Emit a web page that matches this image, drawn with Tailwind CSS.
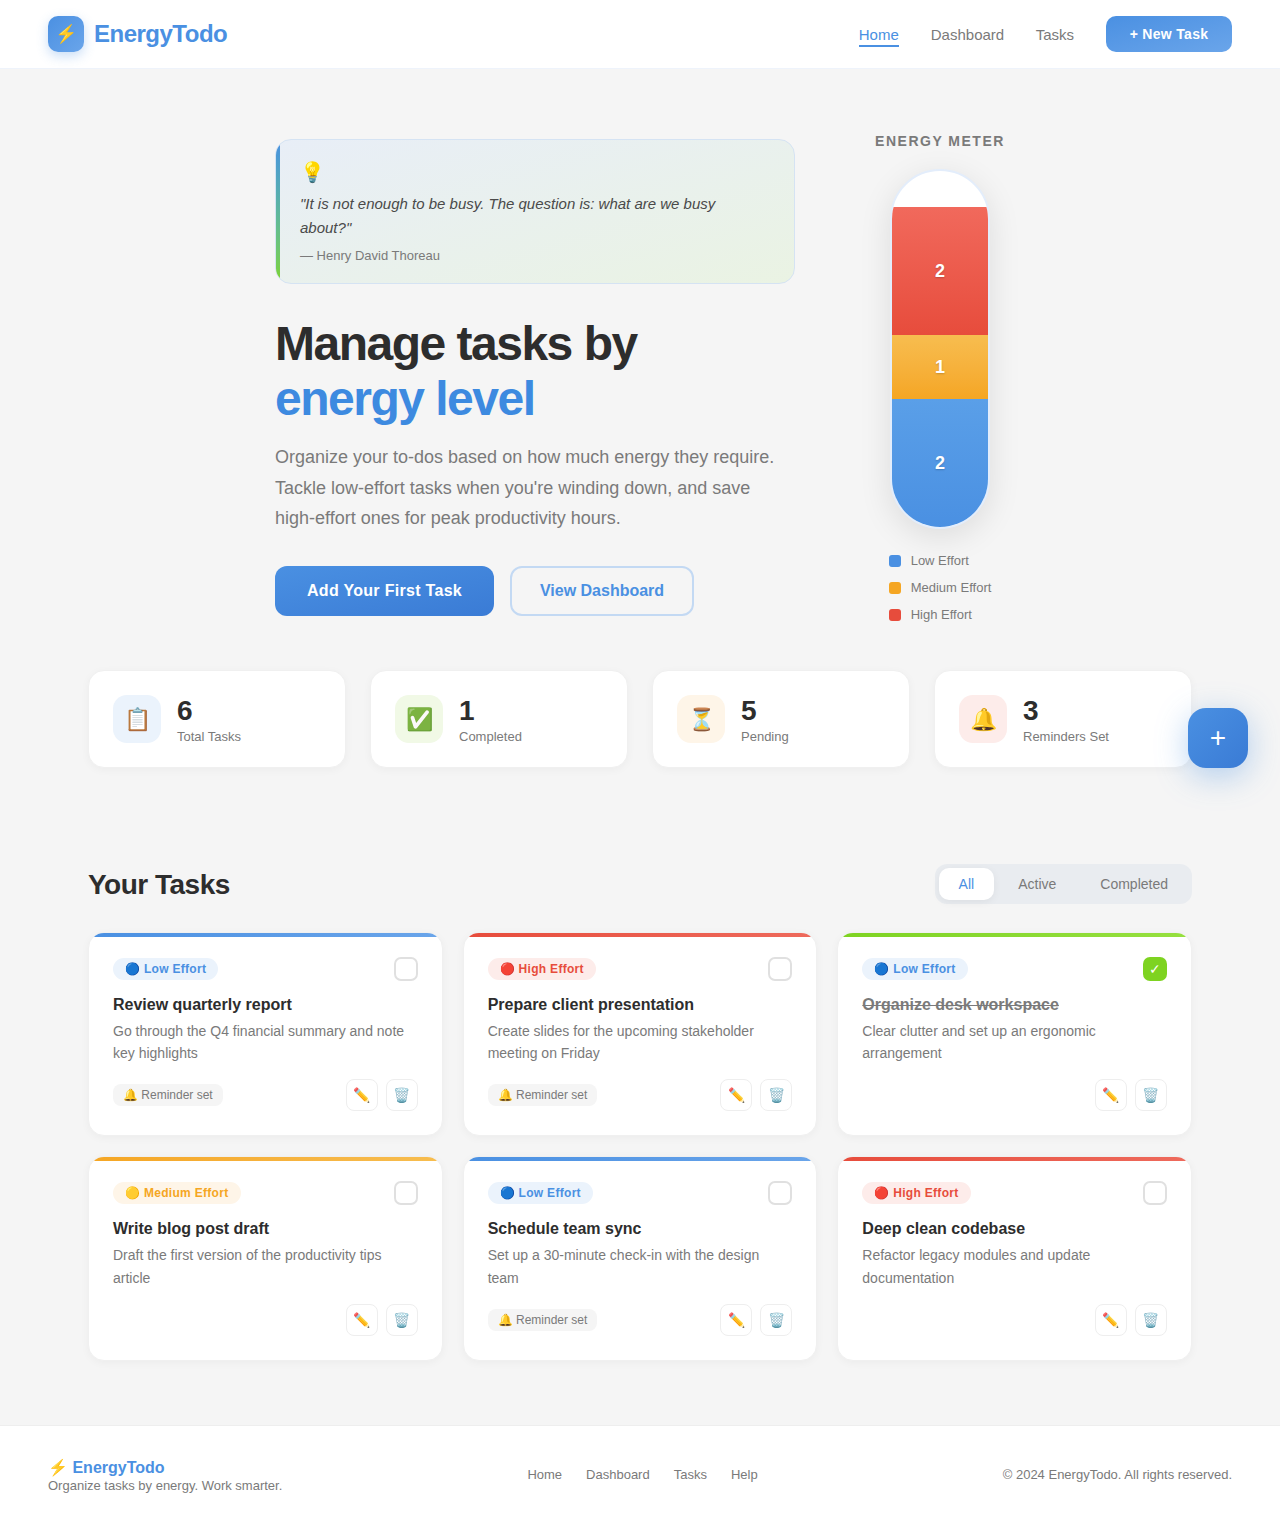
<!DOCTYPE html>
<html lang="en">
<head>
    <meta charset="UTF-8">
    <meta name="viewport" content="width=device-width, initial-scale=1.0">
    <title>EnergyTodo</title>
    <script src="https://cdn.jsdelivr.net/npm/@tailwindcss/browser@4"></script>
</head>
<body class="relative bg-[#f5f5f5] text-[#2d2d2d] font-['Liberation_Sans',sans-serif]">
    <!-- Nav -->
    <nav class="h-[69px] bg-white border-b border-[#eef3fb] px-12 flex items-center justify-between">
        <div class="flex items-center gap-2.5">
            <div class="w-9 h-9 rounded-[10px] bg-gradient-to-br from-[#4a90e2] to-[#6aa5ea] shadow-[0_4px_12px_rgba(74,144,226,0.3)] flex items-center justify-center text-lg leading-none">⚡</div>
            <span class="text-2xl font-bold tracking-[-0.5px] text-[#4a90e2]">EnergyTodo</span>
        </div>
        <div class="flex items-center gap-8">
            <a class="relative text-[15px] leading-[17px] text-[#4a90e2]" href="#">Home<span class="absolute left-0 right-0 -bottom-[4px] h-0.5 bg-[#4a90e2]"></span></a>
            <a class="-mr-[0.5px] text-[15px] leading-[17px] text-[#7a7a7a]" href="#">Dashboard</a>
            <a class="text-[15px] leading-[17px] text-[#7a7a7a]" href="#">Tasks</a>
            <button class="h-9 w-[126px] rounded-[10px] bg-gradient-to-br from-[#4a90e2] to-[#6aa5ea] text-white text-sm font-bold tracking-[0.3px]">+ New Task</button>
        </div>
    </nav>

    <!-- Hero -->
    <section class="flex justify-center items-start gap-20 pt-[63px] pb-12">
        <div class="w-[520px] mt-[7px]">
            <div class="relative overflow-hidden h-[145px] rounded-2xl border border-[#d5e3f3] bg-gradient-to-br from-[#e8eef7] to-[#eaf3e3] pl-6 pt-5">
                <div class="absolute left-0 top-0 bottom-0 w-1 bg-gradient-to-b from-[#4a90e2] to-[#7ed321]"></div>
                <div class="text-xl leading-6">💡</div>
                <p class="mt-2 text-[15px] leading-6 italic text-[#4a4a4a] w-[460px]">"It is not enough to be busy. The question is: what are we busy about?"</p>
                <p class="mt-2 text-[13px] leading-[15px] text-[#7a7a7a]">— Henry David Thoreau</p>
            </div>
            <h1 class="mt-8 text-[48px] leading-[55px] font-bold tracking-[-1.5px] text-[#2d2d2d]">Manage tasks by<br><span class="text-[#3d8ae0]">energy level</span></h1>
            <p class="mt-4 text-lg leading-[30.6px] text-[#7a7a7a]">Organize your to-dos based on how much energy they require. Tackle low-effort tasks when you're winding down, and save high-effort ones for peak productivity hours.</p>
            <div class="mt-8 flex gap-4">
                <button class="h-[50px] w-[219px] rounded-xl bg-gradient-to-br from-[#4a90e2] to-[#3a7bd5] text-white text-base font-bold tracking-[0.3px]">Add Your First Task</button>
                <button class="h-[50px] w-[184px] rounded-xl border-2 border-[#c3d9f3] text-[#4a90e2] text-base font-bold">View Dashboard</button>
            </div>
        </div>
        <div class="w-[130px] flex flex-col items-center">
            <div class="text-sm leading-[18px] font-bold tracking-[1.5px] text-[#7a7a7a] whitespace-nowrap">ENERGY METER</div>
            <div class="mt-[19px] w-[100px] h-[360px] rounded-[50px] border-2 border-[#e3edfb] bg-white overflow-hidden flex flex-col justify-end shadow-[0_8px_32px_rgba(0,0,0,0.1)]">
                <div class="h-32 bg-gradient-to-b from-[#f1695c] to-[#e74c3c] flex items-center justify-center text-white font-bold text-lg [text-shadow:0_1px_2px_rgba(0,0,0,0.2)]">2</div>
                <div class="h-16 bg-gradient-to-b from-[#f7bd4f] to-[#f5a623] flex items-center justify-center text-white font-bold text-lg [text-shadow:0_1px_2px_rgba(0,0,0,0.2)]">1</div>
                <div class="h-32 bg-gradient-to-b from-[#5a9fe8] to-[#4a90e2] flex items-center justify-center text-white font-bold text-lg [text-shadow:0_1px_2px_rgba(0,0,0,0.2)]">2</div>
            </div>
            <div class="mt-6 flex flex-col gap-3 text-[13px] leading-[15px] text-[#7a7a7a] self-center">
                <div class="flex items-center gap-2.5"><span class="w-3 h-3 rounded-[3px] bg-[#4a90e2]"></span>Low Effort</div>
                <div class="flex items-center gap-2.5"><span class="w-3 h-3 rounded-[3px] bg-[#f5a623]"></span>Medium Effort</div>
                <div class="flex items-center gap-2.5"><span class="w-3 h-3 rounded-[3px] bg-[#e74c3c]"></span>High Effort</div>
            </div>
        </div>
    </section>

    <!-- Stats -->
    <section class="mx-[88px] grid grid-cols-4 gap-6">
        <div class="h-[98px] rounded-2xl bg-white border border-[#f0f0f0] shadow-[0_2px_8px_rgba(0,0,0,0.04)] flex items-center gap-4 px-6">
            <div class="w-12 h-12 rounded-[14px] bg-[#ebf3fc] flex items-center justify-center text-[22px]">📋</div>
            <div><div class="text-[28px] leading-8 font-bold">6</div><div class="mt-[2px] text-[13px] leading-[15px] text-[#7a7a7a]">Total Tasks</div></div>
        </div>
        <div class="h-[98px] rounded-2xl bg-white border border-[#f0f0f0] shadow-[0_2px_8px_rgba(0,0,0,0.04)] flex items-center gap-4 px-6">
            <div class="w-12 h-12 rounded-[14px] bg-[#f1f9e6] flex items-center justify-center text-[22px]">✅</div>
            <div><div class="text-[28px] leading-8 font-bold">1</div><div class="mt-[2px] text-[13px] leading-[15px] text-[#7a7a7a]">Completed</div></div>
        </div>
        <div class="h-[98px] rounded-2xl bg-white border border-[#f0f0f0] shadow-[0_2px_8px_rgba(0,0,0,0.04)] flex items-center gap-4 px-6">
            <div class="w-12 h-12 rounded-[14px] bg-[#fef5e8] flex items-center justify-center text-[22px]">⏳</div>
            <div><div class="text-[28px] leading-8 font-bold">5</div><div class="mt-[2px] text-[13px] leading-[15px] text-[#7a7a7a]">Pending</div></div>
        </div>
        <div class="h-[98px] rounded-2xl bg-white border border-[#f0f0f0] shadow-[0_2px_8px_rgba(0,0,0,0.04)] flex items-center gap-4 px-6">
            <div class="w-12 h-12 rounded-[14px] bg-[#fdecea] flex items-center justify-center text-[22px]">🔔</div>
            <div><div class="text-[28px] leading-8 font-bold">3</div><div class="mt-[2px] text-[13px] leading-[15px] text-[#7a7a7a]">Reminders Set</div></div>
        </div>
    </section>

    <!-- Floating add button -->
    <button class="absolute left-[1188px] top-[708px] w-[60px] h-[60px] rounded-[18px] bg-gradient-to-br from-[#4a90e2] to-[#3a7bd5] text-white text-[28px] leading-none shadow-[0_8px_32px_rgba(74,144,226,0.4)]">+</button>

    <!-- Tasks -->
    <section class="mx-[88px] mt-[95px]">
        <div class="flex items-center justify-between">
            <h2 class="mt-[2px] text-[28px] leading-[40px] font-bold tracking-[-0.5px]">Your Tasks</h2>
            <div class="flex gap-1 p-1 rounded-xl bg-[#e9ecf0] text-sm">
                <button class="h-8 px-5 rounded-[10px] bg-white text-[#4a90e2] shadow-[0_2px_8px_rgba(0,0,0,0.06)]">All</button>
                <button class="h-8 px-5 rounded-[10px] text-[#7a7a7a]">Active</button>
                <button class="h-8 px-5 rounded-[10px] text-[#7a7a7a]">Completed</button>
            </div>
        </div>
        <div class="mt-[27px] grid grid-cols-3 gap-x-5 gap-y-5">
            <!-- Card 1 -->
            <div class="relative overflow-hidden rounded-2xl bg-white border border-[#f0f0f0] shadow-[0_2px_8px_rgba(0,0,0,0.04)] p-6 flex flex-col">
                <div class="absolute left-0 right-0 top-0 h-1 bg-gradient-to-r from-[#4a90e2] to-[#6aa5ea]"></div>
                <div class="flex items-center justify-between">
                    <span class="h-[22px] px-3 rounded-full bg-[#ebf3fc] text-[#4a90e2] text-xs font-bold tracking-[0.3px] flex items-center">🔵 Low Effort</span>
                    <span class="w-6 h-6 rounded-[7px] border-2 border-[#e0e0e0]"></span>
                </div>
                <h3 class="mt-[13px] text-base leading-[22px] font-bold">Review quarterly report</h3>
                <p class="mt-1 text-sm leading-[22.4px] text-[#7a7a7a]">Go through the Q4 financial summary and note key highlights</p>
                <div class="mt-[14.6px] flex items-center justify-between">
                    <span class="h-[22px] px-2.5 rounded-lg bg-[#f5f5f5] text-xs text-[#7a7a7a] flex items-center">🔔 Reminder set</span>
                    <div class="ml-auto flex gap-2">
                        <button class="w-8 h-8 rounded-lg border border-[#eeeeee] text-sm">✏️</button>
                        <button class="w-8 h-8 rounded-lg border border-[#eeeeee] text-sm">🗑️</button>
                    </div>
                </div>
            </div>
            <!-- Card 2 -->
            <div class="relative overflow-hidden rounded-2xl bg-white border border-[#f0f0f0] shadow-[0_2px_8px_rgba(0,0,0,0.04)] p-6 flex flex-col">
                <div class="absolute left-0 right-0 top-0 h-1 bg-gradient-to-r from-[#e74c3c] to-[#ee6a5c]"></div>
                <div class="flex items-center justify-between">
                    <span class="h-[22px] px-3 rounded-full bg-[#fdecea] text-[#e74c3c] text-xs font-bold tracking-[0.3px] flex items-center">🔴 High Effort</span>
                    <span class="w-6 h-6 rounded-[7px] border-2 border-[#e0e0e0]"></span>
                </div>
                <h3 class="mt-[13px] text-base leading-[22px] font-bold">Prepare client presentation</h3>
                <p class="mt-1 text-sm leading-[22.4px] text-[#7a7a7a]">Create slides for the upcoming stakeholder meeting on Friday</p>
                <div class="mt-[14.6px] flex items-center justify-between">
                    <span class="h-[22px] px-2.5 rounded-lg bg-[#f5f5f5] text-xs text-[#7a7a7a] flex items-center">🔔 Reminder set</span>
                    <div class="ml-auto flex gap-2">
                        <button class="w-8 h-8 rounded-lg border border-[#eeeeee] text-sm">✏️</button>
                        <button class="w-8 h-8 rounded-lg border border-[#eeeeee] text-sm">🗑️</button>
                    </div>
                </div>
            </div>
            <!-- Card 3 -->
            <div class="relative overflow-hidden rounded-2xl bg-white border border-[#f0f0f0] shadow-[0_2px_8px_rgba(0,0,0,0.04)] p-6 flex flex-col">
                <div class="absolute left-0 right-0 top-0 h-1 bg-gradient-to-r from-[#7ed321] to-[#96e03f]"></div>
                <div class="flex items-center justify-between">
                    <span class="h-[22px] px-3 rounded-full bg-[#ebf3fc] text-[#4a90e2] text-xs font-bold tracking-[0.3px] flex items-center">🔵 Low Effort</span>
                    <span class="w-6 h-6 rounded-[7px] bg-[#7ed321] text-white text-sm flex items-center justify-center">✓</span>
                </div>
                <h3 class="mt-[13px] text-base leading-[22px] font-bold text-[#7a7a7a] line-through">Organize desk workspace</h3>
                <p class="mt-1 text-sm leading-[22.4px] text-[#7a7a7a]">Clear clutter and set up an ergonomic arrangement</p>
                <div class="mt-[14.6px] flex items-center justify-between">
                    <div class="ml-auto flex gap-2">
                        <button class="w-8 h-8 rounded-lg border border-[#eeeeee] text-sm">✏️</button>
                        <button class="w-8 h-8 rounded-lg border border-[#eeeeee] text-sm">🗑️</button>
                    </div>
                </div>
            </div>
            <!-- Card 4 -->
            <div class="relative overflow-hidden rounded-2xl bg-white border border-[#f0f0f0] shadow-[0_2px_8px_rgba(0,0,0,0.04)] p-6 flex flex-col">
                <div class="absolute left-0 right-0 top-0 h-1 bg-gradient-to-r from-[#f5a623] to-[#f7bd4f]"></div>
                <div class="flex items-center justify-between">
                    <span class="h-[22px] px-3 rounded-full bg-[#fef5e8] text-[#f5a623] text-xs font-bold tracking-[0.3px] flex items-center">🟡 Medium Effort</span>
                    <span class="w-6 h-6 rounded-[7px] border-2 border-[#e0e0e0]"></span>
                </div>
                <h3 class="mt-[13px] text-base leading-[22px] font-bold">Write blog post draft</h3>
                <p class="mt-1 text-sm leading-[22.4px] text-[#7a7a7a]">Draft the first version of the productivity tips article</p>
                <div class="mt-[14.6px] flex items-center justify-between">
                    <div class="ml-auto flex gap-2">
                        <button class="w-8 h-8 rounded-lg border border-[#eeeeee] text-sm">✏️</button>
                        <button class="w-8 h-8 rounded-lg border border-[#eeeeee] text-sm">🗑️</button>
                    </div>
                </div>
            </div>
            <!-- Card 5 -->
            <div class="relative overflow-hidden rounded-2xl bg-white border border-[#f0f0f0] shadow-[0_2px_8px_rgba(0,0,0,0.04)] p-6 flex flex-col">
                <div class="absolute left-0 right-0 top-0 h-1 bg-gradient-to-r from-[#4a90e2] to-[#6aa5ea]"></div>
                <div class="flex items-center justify-between">
                    <span class="h-[22px] px-3 rounded-full bg-[#ebf3fc] text-[#4a90e2] text-xs font-bold tracking-[0.3px] flex items-center">🔵 Low Effort</span>
                    <span class="w-6 h-6 rounded-[7px] border-2 border-[#e0e0e0]"></span>
                </div>
                <h3 class="mt-[13px] text-base leading-[22px] font-bold">Schedule team sync</h3>
                <p class="mt-1 text-sm leading-[22.4px] text-[#7a7a7a]">Set up a 30-minute check-in with the design team</p>
                <div class="mt-[14.6px] flex items-center justify-between">
                    <span class="h-[22px] px-2.5 rounded-lg bg-[#f5f5f5] text-xs text-[#7a7a7a] flex items-center">🔔 Reminder set</span>
                    <div class="ml-auto flex gap-2">
                        <button class="w-8 h-8 rounded-lg border border-[#eeeeee] text-sm">✏️</button>
                        <button class="w-8 h-8 rounded-lg border border-[#eeeeee] text-sm">🗑️</button>
                    </div>
                </div>
            </div>
            <!-- Card 6 -->
            <div class="relative overflow-hidden rounded-2xl bg-white border border-[#f0f0f0] shadow-[0_2px_8px_rgba(0,0,0,0.04)] p-6 flex flex-col">
                <div class="absolute left-0 right-0 top-0 h-1 bg-gradient-to-r from-[#e74c3c] to-[#ee6a5c]"></div>
                <div class="flex items-center justify-between">
                    <span class="h-[22px] px-3 rounded-full bg-[#fdecea] text-[#e74c3c] text-xs font-bold tracking-[0.3px] flex items-center">🔴 High Effort</span>
                    <span class="w-6 h-6 rounded-[7px] border-2 border-[#e0e0e0]"></span>
                </div>
                <h3 class="mt-[13px] text-base leading-[22px] font-bold">Deep clean codebase</h3>
                <p class="mt-1 text-sm leading-[22.4px] text-[#7a7a7a]">Refactor legacy modules and update documentation</p>
                <div class="mt-[14.6px] flex items-center justify-between">
                    <div class="ml-auto flex gap-2">
                        <button class="w-8 h-8 rounded-lg border border-[#eeeeee] text-sm">✏️</button>
                        <button class="w-8 h-8 rounded-lg border border-[#eeeeee] text-sm">🗑️</button>
                    </div>
                </div>
            </div>
        </div>
    </section>

    <!-- Footer -->
    <footer class="mt-[64px] h-[99.2px] bg-white border-t border-[#eeeeee] px-12 flex items-center justify-between">
        <div class="mt-[2px]">
            <div class="text-base leading-[20px] font-bold text-[#4a90e2]">⚡ EnergyTodo</div>
            <div class="text-[13px] leading-[15px] text-[#7a7a7a]">Organize tasks by energy. Work smarter.</div>
        </div>
        <div class="flex gap-6 text-[13px] text-[#7a7a7a]">
            <a href="#">Home</a>
            <a href="#">Dashboard</a>
            <a href="#">Tasks</a>
            <a href="#">Help</a>
        </div>
        <div class="text-[13px] text-[#7a7a7a]">© 2024 EnergyTodo. All rights reserved.</div>
    </footer>
</body>
</html>
